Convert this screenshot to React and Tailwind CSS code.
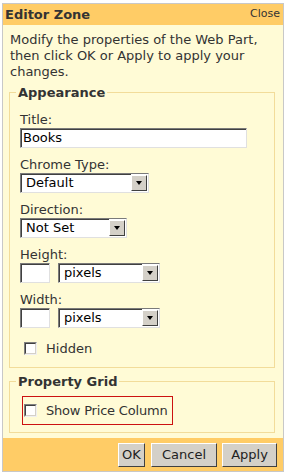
import React from "react";

const font = { fontFamily: "'DejaVu Sans', Verdana, sans-serif" };

const Select = ({ value, width }) => (
  <div className={`flex h-[20px] ${width} bg-white border border-t-[#7a7a7a] border-l-[#7a7a7a] border-b-[#e0e0e0] border-r-[#e0e0e0]`}>
    <div className="flex-1 flex items-center pl-[4px] text-[13px] text-black border-t border-l border-t-[#404040] border-l-[#404040]">{value}</div>
    <div className="w-[16px] flex items-center justify-center bg-[#d4d0c8] border border-t-white border-l-white border-b-[#404040] border-r-[#404040] my-[1px] mr-[1px]">
      <div className="w-0 h-0 border-l-[3px] border-r-[3px] border-t-[4px] border-l-transparent border-r-transparent border-t-black" />
    </div>
  </div>
);

const TextBox = ({ value, width }) => (
  <div className={`h-[20px] ${width} bg-white border border-t-[#7a7a7a] border-l-[#7a7a7a] border-b-[#e0e0e0] border-r-[#e0e0e0]`}>
    <div className="h-full flex items-center pl-[1px] text-[13px] text-black border-t border-l border-t-[#404040] border-l-[#404040]">{value}</div>
  </div>
);

const Check = () => (
  <div className="w-[13px] h-[13px] bg-white border border-t-[#808080] border-l-[#808080] border-b-[#f0f0f0] border-r-[#f0f0f0]">
    <div className="w-full h-full border border-t-[#404040] border-l-[#404040] border-b-[#d4d0c8] border-r-[#d4d0c8]" />
  </div>
);

const Button = ({ children, className }) => (
  <div className={`h-[24px] flex items-center justify-center bg-[#d4d0c8] text-[13px] text-[#222] border border-t-white border-l-white border-b-[#404040] border-r-[#404040] ${className}`}>
    {children}
  </div>
);

const Label = ({ children }) => (
  <div className="text-[13px] text-[#333] leading-[14px] mb-[1px]">{children}</div>
);

export default function App() {
  return (
    <div className="bg-white w-[286px] h-[474px] pt-[3px] pl-[2px]" style={font}>
      <div className="w-[282px] border border-[#c8c8c8] bg-[#fffbd6]">
        {/* header */}
        <div className="h-[21px] flex items-center justify-between bg-[#ffcc66] pl-[2px] pr-[3px]">
          <span className="text-[13px] font-bold text-[#333]">Editor Zone</span>
          <span className="text-[11px] text-[#333]">Close</span>
        </div>

        <div className="pl-[6px] pr-[8px]">
          <p className="text-[13px] leading-[16px] text-[#333] pt-[7px] pl-[1px]">
            Modify the properties of the Web Part, then click OK or Apply to apply your changes.
          </p>

          <fieldset className="mt-[3px] border border-[#f2dc9a] px-[10px] pb-[12px] pt-[10px]">
            <legend className="text-[13px] font-bold text-[#333] px-[2px] -ml-[4px]">Appearance</legend>
            <Label>Title:</Label>
            <TextBox value="Books" width="w-[227px]" />
            <div className="mt-[10px]"><Label>Chrome Type:</Label></div>
            <Select value="Default" width="w-[129px]" />
            <div className="mt-[10px]"><Label>Direction:</Label></div>
            <Select value="Not Set" width="w-[107px]" />
            <div className="mt-[10px]"><Label>Height:</Label></div>
            <div className="flex gap-[8px]">
              <TextBox value="" width="w-[30px]" />
              <Select value="pixels" width="w-[102px]" />
            </div>
            <div className="mt-[10px]"><Label>Width:</Label></div>
            <div className="flex gap-[8px]">
              <TextBox value="" width="w-[30px]" />
              <Select value="pixels" width="w-[102px]" />
            </div>
            <div className="flex items-center h-[13px] leading-[13px] mt-[14px] pl-[4px] gap-[9px]">
              <Check />
              <span className="text-[13px] text-[#333]">Hidden</span>
            </div>
          </fieldset>

          <fieldset className="mt-[4px] border border-[#f2dc9a] pl-[12px] pr-[10px] pb-[7px] pt-[5px]">
            <legend className="text-[13px] font-bold text-[#333] px-[2px] -ml-[6px]">Property Grid</legend>
            <div className="w-[151px] h-[29px] border border-[#cc1111] flex items-center pl-[1px] gap-[9px] whitespace-nowrap">
              <Check />
              <span className="text-[13px] text-[#333] tracking-[-0.2px]">Show Price Column</span>
            </div>
          </fieldset>
        </div>

        {/* footer */}
        <div className="mt-[5px] bg-[#ffcc66] h-[33px] flex items-center justify-end pr-[6px]">
          <Button className="w-[27px]">OK</Button>
          <Button className="w-[66px] ml-[6px]">Cancel</Button>
          <Button className="w-[55px] ml-[5px]">Apply</Button>
        </div>
      </div>
    </div>
  );
}
